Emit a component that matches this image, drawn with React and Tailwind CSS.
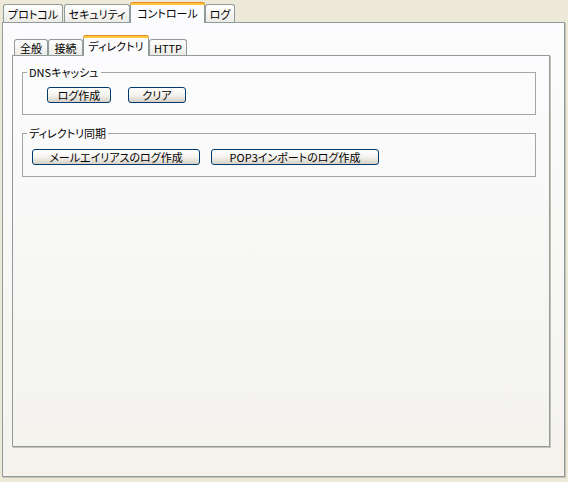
const font = "font-['Noto_Sans_CJK_JP',sans-serif] [font-feature-settings:'palt'] text-[11px] leading-[12px] text-black";

function Tab({ label, width, active, small }) {
  if (active) {
    return (
      <div
        className="relative z-10 -mb-px flex h-[21px] flex-col rounded-t-[3px] border-x border-[#919b9c] bg-[#fcfcfe]"
        style={{ width }}
      >
        <div className="-mx-px h-[3px] rounded-t-[3px] border-t border-[#e68b2c] bg-[#ffc73c]" />
        <div className="flex flex-1 items-center justify-center whitespace-nowrap pb-[2px]">{label}</div>
      </div>
    );
  }
  return (
    <div
      className={`flex ${small ? 'h-[16px]' : 'h-[18px]'} items-center justify-center whitespace-nowrap rounded-t-[3px] border-x border-t border-[#919b9c] bg-linear-to-b from-white to-[#ecebe5]`}
      style={{ width }}
    >
      {label}
    </div>
  );
}

function XpButton({ label, width }) {
  return (
    <button
      type="button"
      className={`${font} flex h-[16px] items-center justify-center whitespace-nowrap rounded-[3px] border border-[#003c74] bg-linear-to-b from-white via-[#f4f3ee] to-[#d6d0c5]`}
      style={{ width }}
    >
      {label}
    </button>
  );
}

export default function App() {
  return (
    <div className={`${font} h-[482px] w-[568px] overflow-hidden bg-[#ece9d8] pl-[2px] pt-[2px]`}>
      <div className="flex h-[20px] items-end">
        <div className="ml-px">
          <Tab label="プロトコル" width={60} />
        </div>
        <div className="ml-px">
          <Tab label="セキュリティ" width={66} />
        </div>
        <Tab label="コントロール" width={75} active />
        <Tab label="ログ" width={30} />
      </div>

      <div className="h-[455px] w-[563px] border border-[#919b9c] bg-linear-to-b from-[#fcfcfe] to-[#f4f3ee] pl-[9px] pt-[12px] shadow-[1px_1px_0_#c5c2b2]">
        <div className="flex h-[20px] items-end">
          <div className="ml-[2px]">
            <Tab label="全般" width={34} small />
          </div>
          <Tab label="接続" width={35} small />
          <Tab label="ディレクトリ" width={66} active small />
          <Tab label="HTTP" width={38} small />
        </div>

        <div className="h-[392px] w-[538px] border border-[#919b9c] bg-linear-to-b from-[#fcfcfe] to-[#f4f3ee] pl-[9px] pr-[13px] pt-[10px] shadow-[1px_1px_0_#c5c2b2]">
          <fieldset className="border border-[#a5a5a5] pb-[11px] pt-[9px]">
            <legend className="ml-[4px] px-[2px] leading-[12px]">DNSキャッシュ</legend>
            <div className="flex gap-[17px] pl-[24px]">
              <XpButton label="ログ作成" width={64} />
              <XpButton label="クリア" width={58} />
            </div>
          </fieldset>

          <fieldset className="mt-[12px] border border-[#a5a5a5] pb-[11px] pt-[10px]">
            <legend className="ml-[4px] px-[2px] leading-[12px]">ディレクトリ同期</legend>
            <div className="flex gap-[11px] pl-[9px]">
              <XpButton label="メールエイリアスのログ作成" width={168} />
              <XpButton label="POP3インポートのログ作成" width={168} />
            </div>
          </fieldset>
        </div>
      </div>
    </div>
  );
}
